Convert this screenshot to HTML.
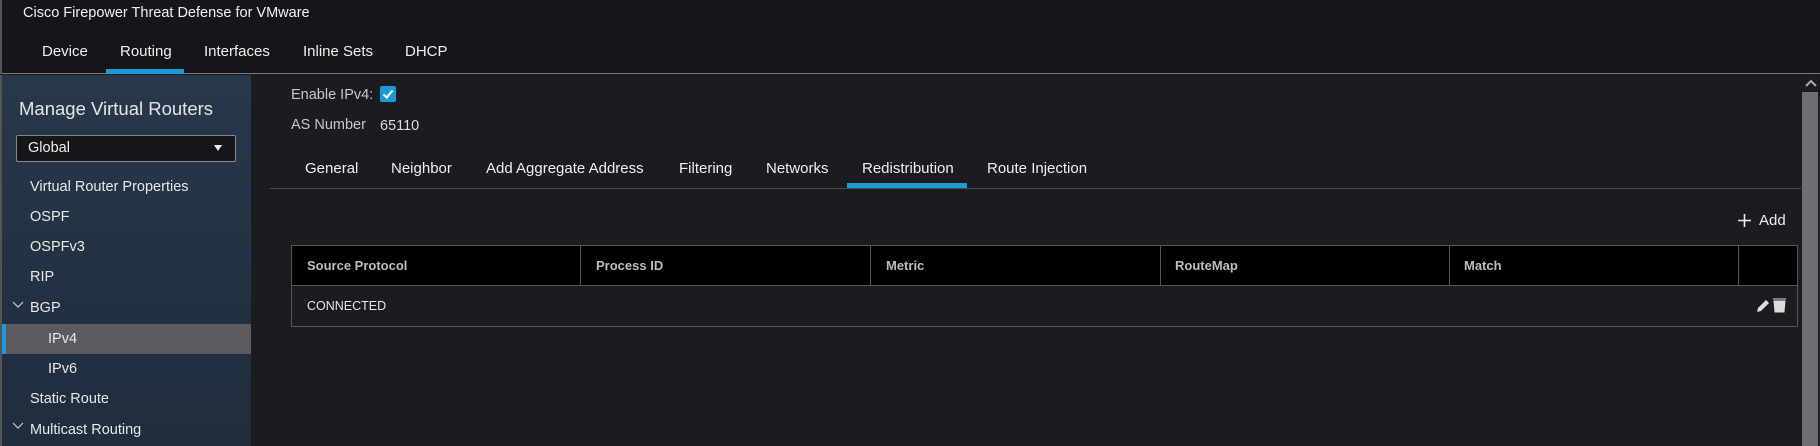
<!DOCTYPE html>
<html><head><meta charset="utf-8"><style>
*{margin:0;padding:0;box-sizing:border-box}
body{width:1820px;height:446px;overflow:hidden;background:#1b1c20;font-family:"Liberation Sans",sans-serif;color:#e6e6e6;position:relative}
.a{position:absolute;white-space:nowrap}
#top{position:absolute;left:0;top:0;width:1820px;height:74px;background:#15161a;border-left:2px solid #555;border-bottom:1px solid #7a7a7a}
#side{position:absolute;left:0;top:75px;width:251px;height:371px;background:linear-gradient(#27384a,#1f2d3d);border-left:2px solid #555}
.nav{font-size:15px;top:43px;color:#f0f0f0}
.mi{font-size:14.5px;color:#e8e8e8;transform:translateY(-50%)}
.tb{font-size:15px;top:160px;color:#f0f0f0}
.th{font-size:13px;font-weight:bold;color:#bdbdbd;top:258px}
.vl{position:absolute;top:245px;width:1px;height:41px;background:#555}
</style></head><body>
<div id="top"></div>
<div class="a" style="left:23px;top:5px;font-size:14.5px;color:#f2f2f2">Cisco Firepower Threat Defense for VMware</div>
<div class="a nav" style="left:42px">Device</div>
<div class="a nav" style="left:120px">Routing</div>
<div class="a nav" style="left:204px">Interfaces</div>
<div class="a nav" style="left:303px">Inline Sets</div>
<div class="a nav" style="left:405px">DHCP</div>
<div class="a" style="left:106px;top:69px;width:78px;height:5px;background:#1a9ad6"></div>

<div id="side"></div>
<div class="a" style="left:19px;top:98px;font-size:18.5px;color:#e6e6e6">Manage Virtual Routers</div>
<div class="a" style="left:16px;top:135px;width:220px;height:27px;background:#15161a;border:1px solid #888;border-radius:2px"></div>
<div class="a" style="left:28px;top:140px;font-size:14.5px;color:#eee">Global</div>
<div class="a" style="left:214px;top:145px;width:0;height:0;border-left:4.5px solid transparent;border-right:4.5px solid transparent;border-top:6px solid #eee"></div>
<div class="a mi" style="left:30px;top:187px">Virtual Router Properties</div>
<div class="a mi" style="left:30px;top:217px">OSPF</div>
<div class="a mi" style="left:30px;top:247px">OSPFv3</div>
<div class="a mi" style="left:30px;top:277px">RIP</div>
<svg class="a" style="left:12px;top:300px" width="12" height="10"><path d="M1 2 L6 7 L11 2" stroke="#ccc" stroke-width="1.2" fill="none"/></svg>
<div class="a mi" style="left:30px;top:308px">BGP</div>
<div class="a" style="left:2px;top:324px;width:249px;height:30px;background:#5b5b5f"></div>
<div class="a" style="left:2px;top:324px;width:4px;height:30px;background:#1a9ad6"></div>
<div class="a mi" style="left:48px;top:339px">IPv4</div>
<div class="a mi" style="left:48px;top:369px">IPv6</div>
<div class="a mi" style="left:30px;top:399px">Static Route</div>
<svg class="a" style="left:12px;top:421px" width="12" height="10"><path d="M1 2 L6 7 L11 2" stroke="#ccc" stroke-width="1.2" fill="none"/></svg>
<div class="a mi" style="left:30px;top:430px">Multicast Routing</div>

<div class="a" style="left:291px;top:87px;font-size:14.5px;color:#c8c8c8">Enable IPv4:</div>
<svg class="a" style="left:380px;top:86px" width="16" height="16"><rect width="16" height="16" rx="2" fill="#1a9ad6"/><path d="M3.5 8.5 L6.8 11.5 L12.5 4.5" stroke="#fff" stroke-width="2" fill="none"/></svg>
<div class="a" style="left:291px;top:117px;font-size:14.5px;color:#c8c8c8">AS Number</div>
<div class="a" style="left:380px;top:118px;font-size:14.5px;color:#ddd">65110</div>

<div class="a tb" style="left:305px">General</div>
<div class="a tb" style="left:391px">Neighbor</div>
<div class="a tb" style="left:486px">Add Aggregate Address</div>
<div class="a tb" style="left:679px">Filtering</div>
<div class="a tb" style="left:766px">Networks</div>
<div class="a tb" style="left:862px">Redistribution</div>
<div class="a tb" style="left:987px">Route Injection</div>
<div class="a" style="left:270px;top:188px;width:1531px;height:1px;background:#4a4a4e"></div>
<div class="a" style="left:847px;top:183px;width:120px;height:5px;background:#1a9ad6"></div>

<svg class="a" style="left:1737px;top:213px" width="15" height="15"><path d="M7.5 1 V14 M1 7.5 H14" stroke="#eee" stroke-width="1.6"/></svg>
<div class="a" style="left:1759px;top:212px;font-size:15px;color:#eee">Add</div>

<div class="a" style="left:291px;top:245px;width:1507px;height:82px;border:1px solid #555;background:#1b1c20"></div>
<div class="a" style="left:292px;top:246px;width:1505px;height:40px;background:#000;border-bottom:1px solid #555"></div>
<div class="vl" style="left:580px"></div><div class="vl" style="left:870px"></div><div class="vl" style="left:1160px"></div><div class="vl" style="left:1449px"></div><div class="vl" style="left:1738px"></div>
<div class="a th" style="left:307px">Source Protocol</div>
<div class="a th" style="left:596px">Process ID</div>
<div class="a th" style="left:886px">Metric</div>
<div class="a th" style="left:1175px">RouteMap</div>
<div class="a th" style="left:1464px">Match</div>
<div class="a" style="left:307px;top:299px;font-size:12.5px;color:#e6e6e6">CONNECTED</div>
<svg class="a" style="left:1755px;top:297px" width="32" height="17"><path d="M2 15 L3 11 L11 3 L14 6 L6 14 Z" fill="#ddd"/><path d="M18 2 H31 M19 4 H30 L29 15 H20 Z" fill="#ddd" stroke="#ddd" stroke-width="1"/></svg>

<div class="a" style="left:1802px;top:75px;width:18px;height:371px;background:#1b1c20"></div>
<svg class="a" style="left:1805px;top:79px" width="12" height="8"><path d="M1 7 L6 2 L11 7" stroke="#aaa" stroke-width="2" fill="none"/></svg>
<div class="a" style="left:1802px;top:92px;width:16px;height:354px;background:#6f6f73"></div>
</body></html>
